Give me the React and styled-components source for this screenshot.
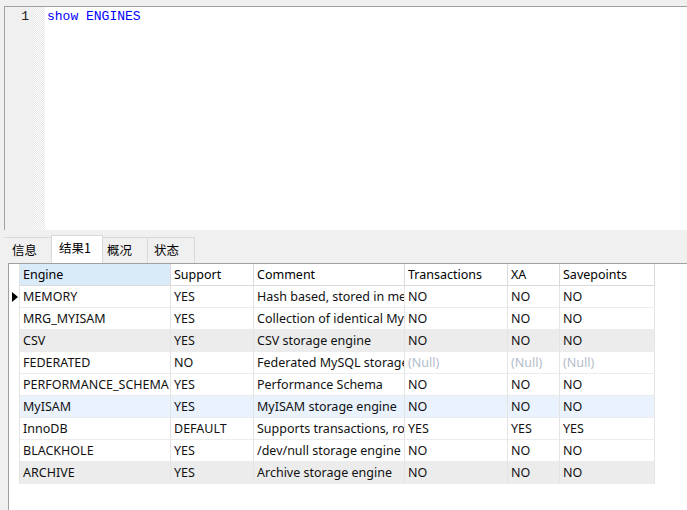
import styled, { createGlobalStyle } from "styled-components";

const GlobalStyle = createGlobalStyle`
  html, body {
    margin: 0;
    padding: 0;
    background: #f0f0f0;
  }
  body {
    font-family: "Noto Sans", "Noto Sans CJK SC", sans-serif;
    font-size: 12.5px;
    color: #000;
  }
`;

const Window = styled.div`
  width: 687px;
  height: 510px;
  display: flex;
  flex-direction: column;
  background: #f0f0f0;
  overflow: hidden;
`;

const Editor = styled.div`
  margin: 6px 0 0 4px;
  height: 223px;
  display: flex;
  border-top: 1px solid #a0a0a0;
  border-left: 1px solid #a0a0a0;
  background: #fff;
`;

const Gutter = styled.div`
  width: 28px;
  background: #f0f0f0;
  font-family: "Liberation Mono", monospace;
  font-size: 13px;
  color: #222;
  text-align: right;
  padding: 2px 4px 0 0;
  box-sizing: border-box;
  line-height: 16px;
`;

const Fold = styled.div`
  width: 12px;
  background-image: repeating-conic-gradient(#e6e6e6 0 25%, #fff 0 50%);
  background-size: 2px 2px;
`;

const Code = styled.div`
  flex: 1;
  padding: 2px 0 0 2px;
  font-family: "Liberation Mono", monospace;
  font-size: 13px;
  line-height: 16px;
  color: #0000ff;
`;

const TabBar = styled.div`
  height: 33px;
  display: flex;
  align-items: flex-end;
  padding-left: 4px;
`;

const Tab = styled.div`
  height: ${(p) => (p.$active ? "28px" : "26px")};
  width: ${(p) => p.$w}px;
  box-sizing: border-box;
  display: flex;
  align-items: center;
  padding-left: ${(p) => p.$pl}px;
  padding-bottom: ${(p) => (p.$active ? 5 : 3)}px;
  font-family: "Noto Sans CJK SC", sans-serif;
  font-size: 12.5px;
  background: ${(p) => (p.$active ? "#fff" : "#f0f0f0")};
  border: 1px solid #d9d9d9;
  border-bottom: none;
  border-left: ${(p) => (p.$first ? "none" : "1px solid #d9d9d9")};
  margin-left: ${(p) => (p.$first ? 0 : -1)}px;
  position: relative;
  z-index: ${(p) => (p.$active ? 1 : 0)};
`;

const Grid = styled.div`
  flex: 1;
  margin-left: 8px;
  border-top: 1px solid #a0a0a0;
  border-left: 1px solid #a0a0a0;
  background: #fff;
`;

const Row = styled.div`
  display: grid;
  grid-template-columns: 11px 151px 83px 151px 103px 52px 95px;
  height: 22px;
  width: 646px;
`;

const Indicator = styled.div`
  border-right: 1px solid #e4e4e4;
  display: flex;
  align-items: center;
  justify-content: center;
  background: #fff;
`;

const Cell = styled.div`
  box-sizing: border-box;
  padding-left: 3px;
  line-height: 21px;
  white-space: nowrap;
  overflow: hidden;
  border-right: 1px solid #e4e4e4;
  border-bottom: 1px solid #ececec;
  background: ${(p) => p.$bg || "transparent"};
  color: ${(p) => (p.$null ? "#b4bccb" : "#111")};
`;

const HeadCell = styled(Cell)`
  border-right: 1px solid #dadada;
  border-bottom: 1px solid #dadada;
  color: #000;
`;

const Arrow = styled.div`
  width: 0;
  height: 0;
  border-top: 5px solid transparent;
  border-bottom: 5px solid transparent;
  border-left: 6px solid #000;
  margin-left: 2px;
`;

const columns = ["Engine", "Support", "Comment", "Transactions", "XA", "Savepoints"];

const N = null;
const rows = [
  ["MEMORY", "YES", "Hash based, stored in memory, useful for temporary tables", "NO", "NO", "NO"],
  ["MRG_MYISAM", "YES", "Collection of identical MyISAM tables", "NO", "NO", "NO"],
  ["CSV", "YES", "CSV storage engine", "NO", "NO", "NO"],
  ["FEDERATED", "NO", "Federated MySQL storage engine", N, N, N],
  ["PERFORMANCE_SCHEMA", "YES", "Performance Schema", "NO", "NO", "NO"],
  ["MyISAM", "YES", "MyISAM storage engine", "NO", "NO", "NO"],
  ["InnoDB", "DEFAULT", "Supports transactions, row-level locking, and foreign keys", "YES", "YES", "YES"],
  ["BLACKHOLE", "YES", "/dev/null storage engine (anything you write to it disappears)", "NO", "NO", "NO"],
  ["ARCHIVE", "YES", "Archive storage engine", "NO", "NO", "NO"],
];

function rowBg(i) {
  if (i === 5) return "#e9f2fd";
  if (i % 3 === 2) return "#ececec";
  return "#fff";
}

export default function App() {
  return (
    <Window>
      <GlobalStyle />
      <Editor>
        <Gutter>1</Gutter>
        <Fold />
        <Code>show ENGINES</Code>
      </Editor>

      <TabBar>
        <Tab $w={48} $pl={8} $first>信息</Tab>
        <Tab $w={52} $pl={7} $active>结果1</Tab>
        <Tab $w={46} $pl={4}>概况</Tab>
        <Tab $w={48} $pl={6}>状态</Tab>
      </TabBar>

      <Grid>
        <Row>
          <Indicator />
          {columns.map((c, i) => (
            <HeadCell key={c} $bg={i === 0 ? "#d9eaf8" : "#fff"}>
              {c}
            </HeadCell>
          ))}
        </Row>
        {rows.map((r, i) => (
          <Row key={r[0]}>
            <Indicator>{i === 0 && <Arrow />}</Indicator>
            {r.map((v, j) => (
              <Cell key={j} $bg={rowBg(i)} $null={v === null}>
                {v === null ? "(Null)" : v}
              </Cell>
            ))}
          </Row>
        ))}
      </Grid>
    </Window>
  );
}
